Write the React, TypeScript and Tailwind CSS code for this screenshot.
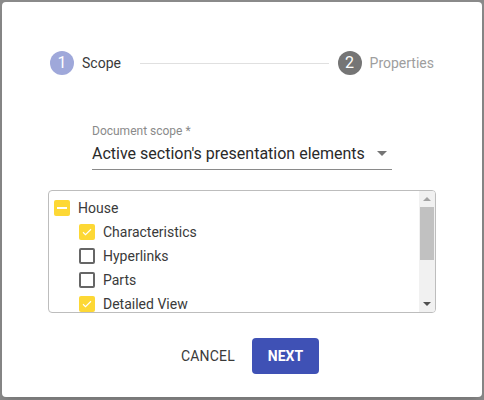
import React from "react";

const font = { fontFamily: "Roboto, 'Liberation Sans', sans-serif" };

function Check() {
  return (
    <svg width="12" height="12" viewBox="0 0 24 24" fill="none">
      <path d="M4 12.5l5 5L20 6.5" stroke="#fff" strokeWidth="2.2" />
    </svg>
  );
}

function Box({ state }: { state: "on" | "off" | "ind" }) {
  if (state === "off")
    return <div className="w-4 h-4 rounded-[2px] border-2 border-[#666666] bg-white shrink-0" />;
  return (
    <div className="w-4 h-4 rounded-[2px] bg-[#fdd835] flex items-center justify-center shrink-0">
      {state === "on" ? <Check /> : <div className="w-[10px] h-[2px] bg-white" />}
    </div>
  );
}

function Row({ label, state, indent }: { label: string; state: "on" | "off" | "ind"; indent?: boolean }) {
  return (
    <div className={`h-6 flex items-center ${indent ? "pl-[30px]" : "pl-[5px]"}`}>
      <Box state={state} />
      <span className="ml-[8px] text-[14px] text-[#3a3a3a]">{label}</span>
    </div>
  );
}

export default function App() {
  return (
    <div className="w-[484px] h-[400px] bg-[#8a8a8a] p-[2px] overflow-hidden" style={font}>
      <div className="w-[480px] h-[395px] bg-white rounded-[4px] shadow-lg flex flex-col">
        {/* Stepper */}
        <div className="flex items-center px-[48px] mt-[49px] h-6">
          <div className="w-6 h-6 rounded-full bg-[#9fa8da] text-white text-[16px] flex items-center justify-center">1</div>
          <span className="ml-2 text-[14px] text-[#3a3a3a]">Scope</span>
          <div className="flex-1 h-px bg-[#e0e0e0] ml-[19px] mr-[9px]" />
          <div className="w-6 h-6 rounded-full bg-[#757575] text-white text-[16px] flex items-center justify-center">2</div>
          <span className="ml-2 text-[14px] text-[#9e9e9e]">Properties</span>
        </div>

        {/* Select */}
        <div className="w-[300px] mx-auto mt-[49px]">
          <div className="text-[12px] leading-[14px] text-[#8a8a8a]">Document scope *</div>
          <div className="mt-[3px] flex items-center justify-between border-b border-[#8a8a8a] pb-[4px]">
            <span className="text-[16px] leading-[19px] text-[#2a2a2a]">Active section's presentation elements</span>
            <svg width="24" height="24" viewBox="0 0 24 24" className="mr-[-2px]">
              <path d="M7 10l5 5 5-5z" fill="#757575" />
            </svg>
          </div>
        </div>

        {/* Tree */}
        <div className="w-[388px] h-[123px] mx-auto mt-[20px] border border-[#bdbdbd] rounded-[4px] flex overflow-hidden">
          <div className="flex-1 pt-[5px] overflow-hidden">
            <Row label="House" state="ind" />
            <Row label="Characteristics" state="on" indent />
            <Row label="Hyperlinks" state="off" indent />
            <Row label="Parts" state="off" indent />
            <Row label="Detailed View" state="on" indent />
          </div>
          <div className="w-4 bg-[#f1f1f1] flex flex-col items-center">
            <div className="h-4 flex items-center justify-center">
              <svg width="8" height="6" viewBox="0 0 8 6"><path d="M0 5L4 1l4 4z" fill="#a3a3a3" /></svg>
            </div>
            <div className="w-[14px] h-[53px] bg-[#c1c1c1]" />
            <div className="flex-1" />
            <div className="h-4 flex items-center justify-center">
              <svg width="8" height="6" viewBox="0 0 8 6"><path d="M0 1l4 4 4-4z" fill="#505050" /></svg>
            </div>
          </div>
        </div>

        {/* Buttons */}
        <div className="flex justify-center items-center mt-[25px] gap-[9px] pl-[8px]">
          <button className="h-9 px-2 text-[14px] text-[#3a3a3a] tracking-[0.2px]">CANCEL</button>
          <button className="h-9 w-[67px] rounded-[4px] bg-[#3f51b5] text-white text-[14px] font-bold">NEXT</button>
        </div>
      </div>
    </div>
  );
}
